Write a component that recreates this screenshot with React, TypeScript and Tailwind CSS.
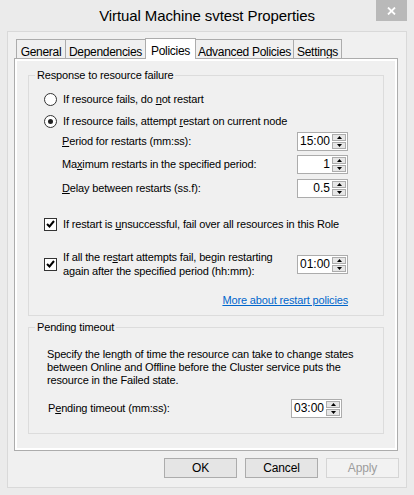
import React from "react";

const font = "font-['Liberation_Sans',Arial,sans-serif]";

const tabs = [
  { label: "General", w: "w-[50px]" },
  { label: "Dependencies", w: "w-[81px]" },
  { label: "Policies", w: "w-[51px]", active: true },
  { label: "Advanced Policies", w: "w-[99px]" },
  { label: "Settings", w: "w-[49px]" },
];

// windows-style up/down control
const Spinner = ({ value, className = "" }: { value: string; className?: string }) => (
  <div className={`flex h-[19px] w-[51px] shrink-0 border border-[#acacac] bg-white ${className}`}>
    <div className="flex flex-1 items-center justify-end pr-[2px] text-[12px] leading-none tracking-normal text-black">
      {value}
    </div>
    <div className="flex w-[15px] flex-col gap-px py-px pr-px">
      <div className="flex flex-1 items-center justify-center border border-[#acacac] bg-[#e6e6e6]">
        <svg width="5" height="3" viewBox="0 0 5 3">
          <path d="M0 3 L2.5 0 L5 3 Z" fill="#000" />
        </svg>
      </div>
      <div className="flex flex-1 items-center justify-center border border-[#acacac] bg-[#e6e6e6]">
        <svg width="5" height="3" viewBox="0 0 5 3">
          <path d="M0 0 L5 0 L2.5 3 Z" fill="#000" />
        </svg>
      </div>
    </div>
  </div>
);

const Radio = ({ checked }: { checked?: boolean }) => (
  <span className="flex h-[13px] w-[13px] shrink-0 items-center justify-center rounded-full border border-[#333] bg-white">
    {checked && <span className="h-[5px] w-[5px] rounded-full bg-[#222]" />}
  </span>
);

const Check = () => (
  <span className="flex h-[13px] w-[13px] shrink-0 items-center justify-center border border-[#333] bg-white">
    <svg width="9" height="8" viewBox="0 0 9 8">
      <path d="M1 4 L3.5 6.5 L8 1" stroke="#000" strokeWidth="2" fill="none" />
    </svg>
  </span>
);

const U = ({ children }: { children: React.ReactNode }) => <span className="underline underline-offset-1">{children}</span>;

const Button = ({ label, disabled }: { label: string; disabled?: boolean }) => (
  <div
    className={`flex h-[20px] w-[73px] items-center justify-center border text-[12px] ${
      disabled ? "border-[#d5d5d5] bg-[#f2f2f2] text-[#9d9d9d]" : "border-[#acacac] bg-[#e5e5e5] text-black"
    }`}
  >
    {label}
  </div>
);

export default function App() {
  return (
    <div className={`${font} flex h-[495px] w-[414px] flex-col bg-[#ebebeb] text-[11px] tracking-[-0.15px] text-black`}>
      {/* title bar */}
      <div className="grid h-[31px] grid-cols-[1fr_auto_1fr]">
        <div />
        <div className="flex items-center pt-px text-[15px] tracking-[-0.1px] text-black">Virtual Machine svtest Properties</div>
        <div className="flex justify-end pr-[7px]">
          <div className="flex h-[21px] w-[31px] items-center justify-center bg-[#b9b9b9]">
            <svg width="9" height="8" viewBox="0 0 9 8">
              <path d="M1 0.5 L8 7.5 M8 0.5 L1 7.5" stroke="#fff" strokeWidth="1.8" />
            </svg>
          </div>
        </div>
      </div>

      {/* client area */}
      <div className="mx-[7px] mb-[7px] flex flex-1 flex-col border border-[#d9d9d9] bg-[#f0f0f0] pl-[6px] pr-[7px] pt-[6px]">
        <div className="flex h-[20px] items-end pl-[2px] text-[12px] tracking-[-0.3px]">
          {tabs.map((t, i) =>
            t.active ? (
              <div
                key={t.label}
                className={`${t.w} relative z-10 -mb-px -ml-px flex h-[21px] items-start justify-center whitespace-nowrap border border-b-0 border-[#acacac] bg-white pt-[3px]`}
              >
                {t.label}
              </div>
            ) : (
              <div
                key={t.label}
                className={`${t.w} ${i > 0 ? "-ml-px" : ""} flex h-[19px] items-start justify-center whitespace-nowrap border border-b-0 border-[#acacac] bg-[#f0f0f0] pt-[3px]`}
              >
                {t.label}
              </div>
            )
          )}
        </div>

        <div className="mr-px h-[393px] border border-[#acacac] bg-white p-[2px]">
          <div className="flex h-full flex-col bg-[#f0f0f0] px-[11px] pt-[7px]">
            <fieldset className="min-w-0 border border-[#dcdcdc]">
              <legend className="ml-[6px] px-[2px] leading-[14px]">Response to resource failure</legend>
              <div className="pb-[5px] pl-[15px] pr-[35px]">
                <div className="mt-[7px] flex h-[20px] items-center gap-[6px]">
                  <Radio />
                  <span>
                    If resource fails, do <U>n</U>ot restart
                  </span>
                </div>
                <div className="mt-[2px] flex h-[20px] items-center gap-[6px]">
                  <Radio checked />
                  <span>
                    If resource fails, attempt <U>r</U>estart on current node
                  </span>
                </div>
                <div className="flex h-[20px] items-center justify-between pl-[18px]">
                  <span>
                    <U>P</U>eriod for restarts (mm:ss):
                  </span>
                  <Spinner value="15:00" />
                </div>
                <div className="mt-[3px] flex h-[20px] items-center justify-between pl-[18px]">
                  <span>
                    Ma<U>x</U>imum restarts in the specified period:
                  </span>
                  <Spinner value="1" />
                </div>
                <div className="mt-[4px] flex h-[20px] items-center justify-between pl-[18px]">
                  <span>
                    <U>D</U>elay between restarts (ss.f):
                  </span>
                  <Spinner value="0.5" />
                </div>
                <div className="mt-[16px] flex h-[20px] items-center gap-[6px] whitespace-nowrap">
                  <Check />
                  <span>
                    If restart is <U>u</U>nsuccessful, fail over all resources in this Role
                  </span>
                </div>
                <div className="mt-[16px] flex h-[28px] items-center">
                  <Check />
                  <span className="ml-[6px] flex-1 whitespace-nowrap leading-[14px]">
                    If all the re<U>s</U>tart attempts fail, begin restarting
                    <br />
                    again after the specified period (hh:mm):
                  </span>
                  <Spinner value="01:00" />
                </div>
                <div className="mt-[12px] flex h-[20px] items-center justify-end">
                  <span className="text-[#0066cc] underline underline-offset-1">More about restart policies</span>
                </div>
              </div>
            </fieldset>

            <fieldset className="mt-[4px] min-w-0 border border-[#dcdcdc]">
              <legend className="ml-[6px] px-[2px] leading-[14px]">Pending timeout</legend>
              <div className="pb-[15px] pl-[18px] pr-[10px]">
                <p className="mt-[14px] whitespace-nowrap leading-[13px]">
                  Specify the length of time the resource can take to change states
                  <br />
                  between Online and Offline before the Cluster service puts the
                  <br />
                  resource in the Failed state.
                </p>
                <div className="mr-[31px] mt-[11px] flex h-[20px] items-center justify-between pl-px">
                  <span>
                    P<U>e</U>nding timeout (mm:ss):
                  </span>
                  <Spinner value="03:00" />
                </div>
              </div>
            </fieldset>
          </div>
        </div>

        <div className="mt-[7px] flex justify-end gap-[8px]">
          <Button label="OK" />
          <Button label="Cancel" />
          <Button label="Apply" disabled />
        </div>
      </div>
    </div>
  );
}
